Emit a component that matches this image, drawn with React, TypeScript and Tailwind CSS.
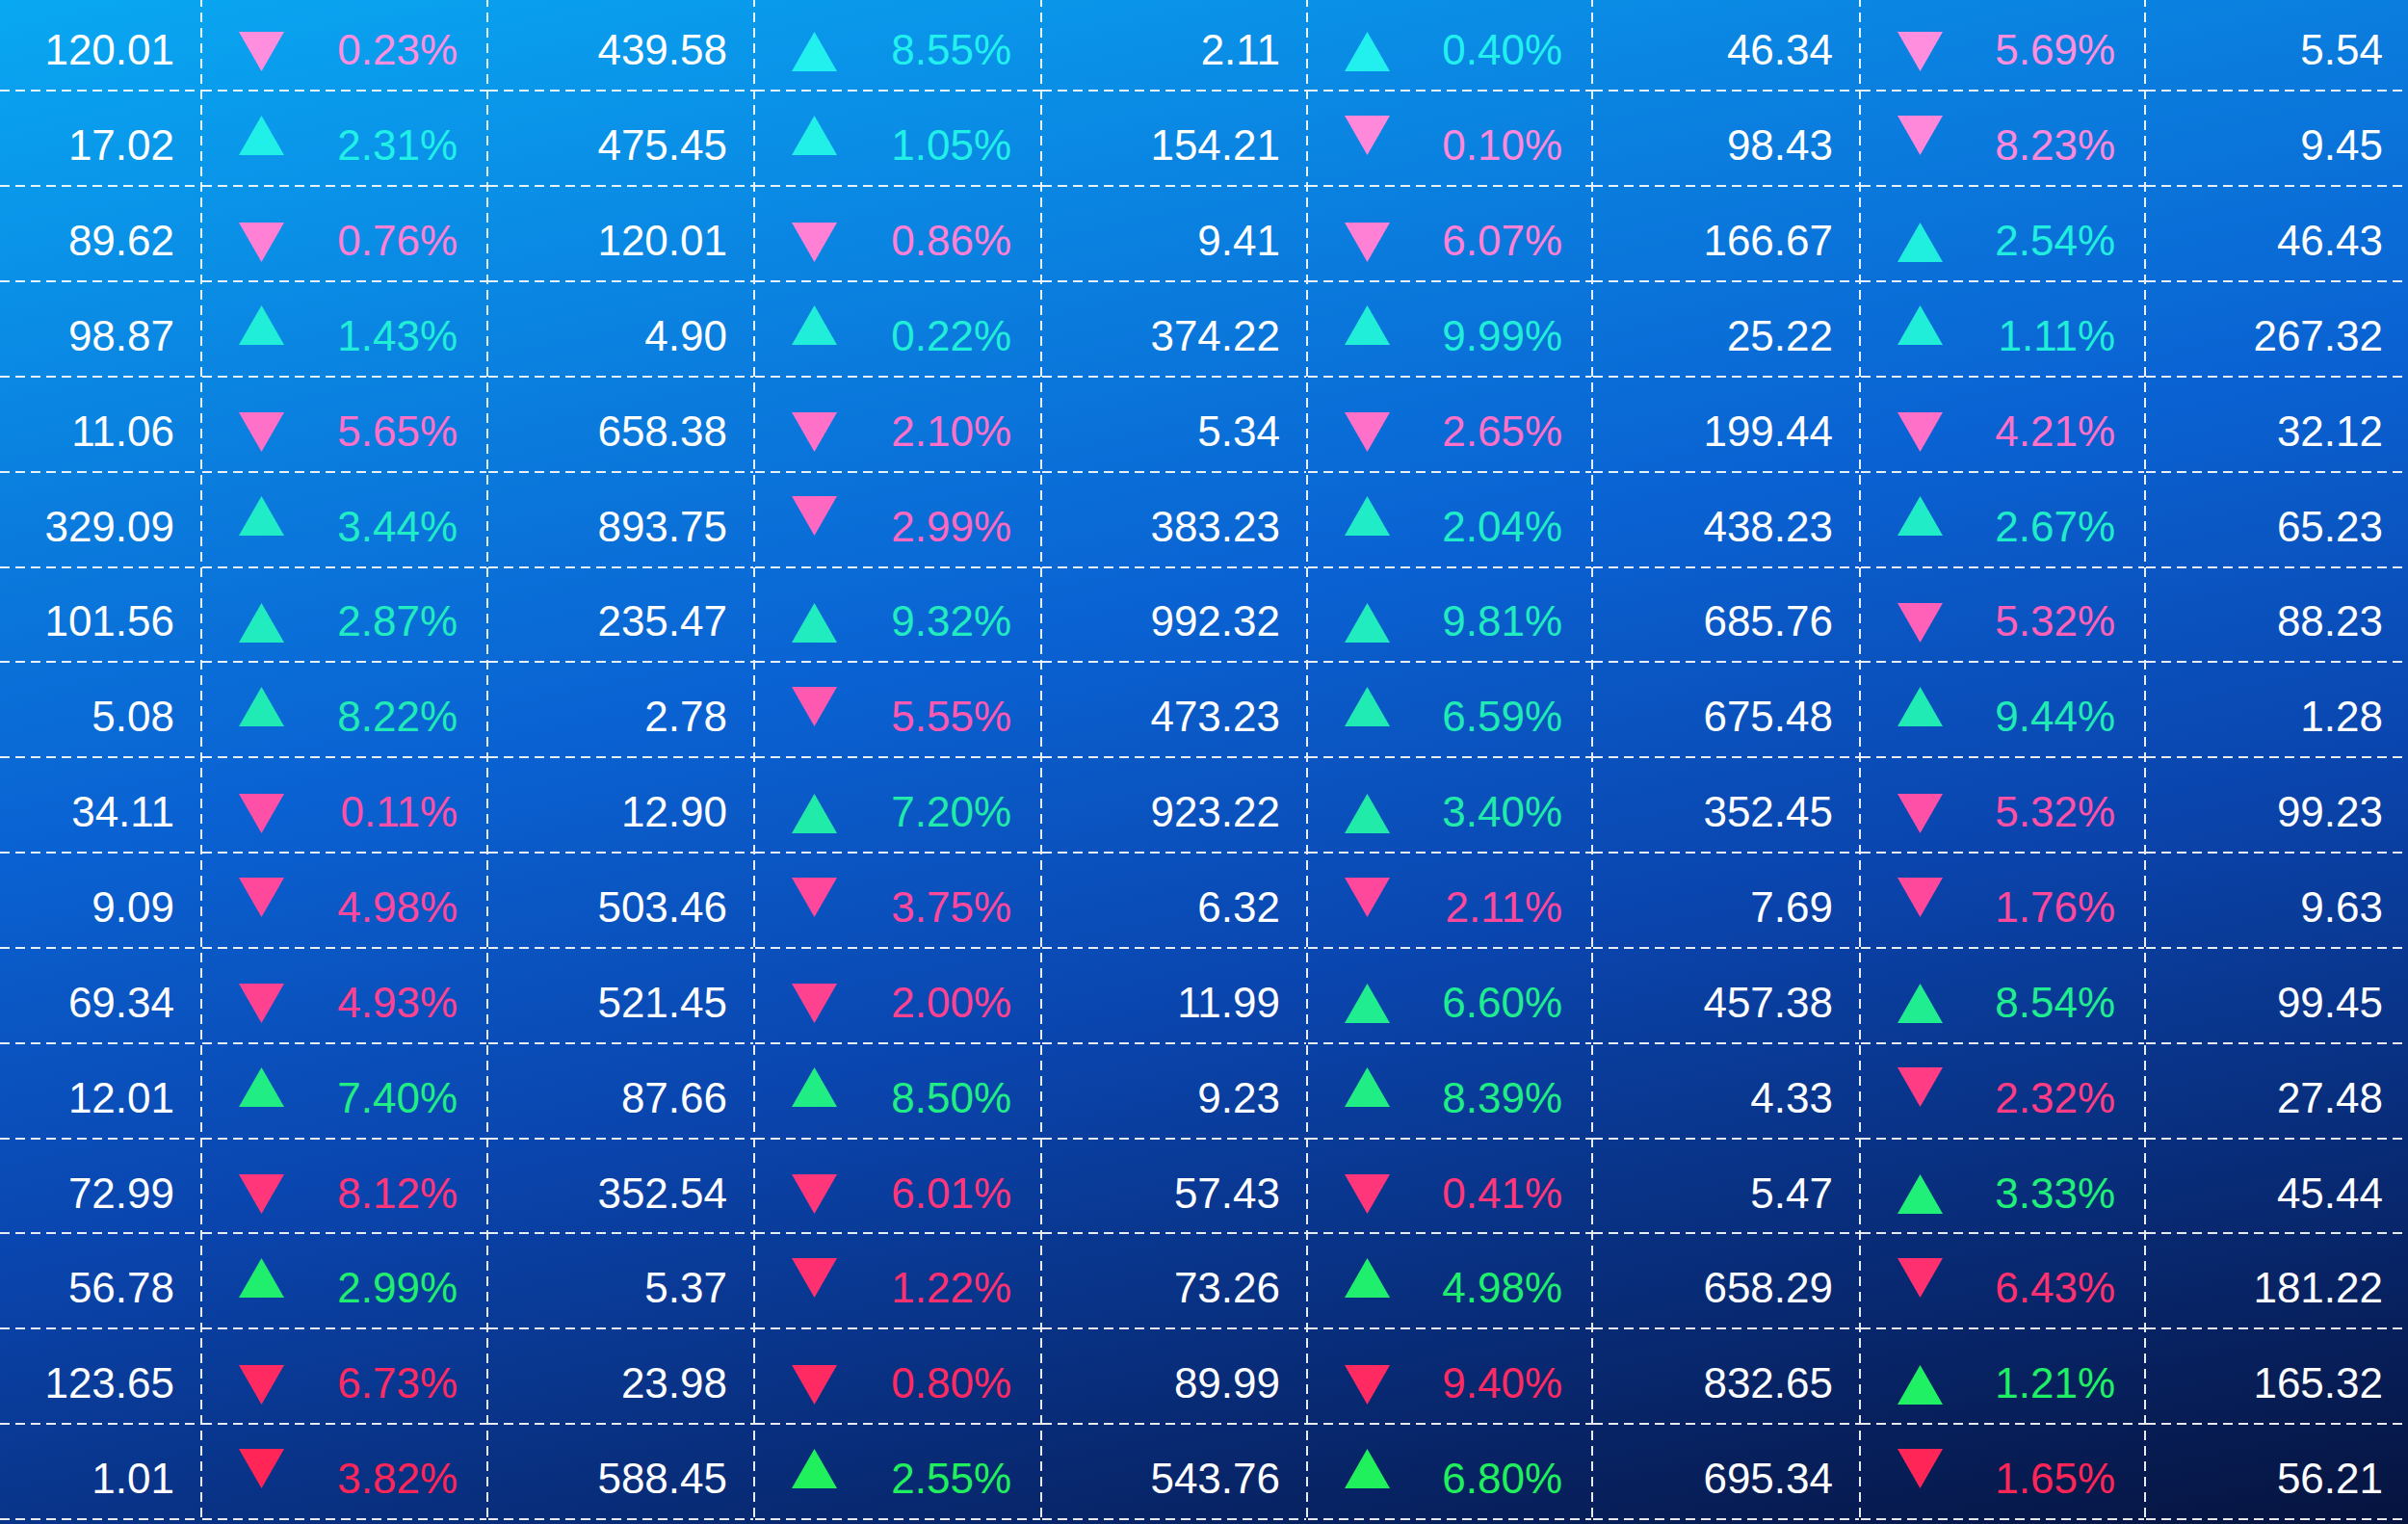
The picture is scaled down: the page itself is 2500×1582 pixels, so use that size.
import React from 'react'

type Cell = string

// each row: value, change, value, change, value, change, value, change, value
const rows: Cell[][] = [
  ['120.01', '-0.23', '439.58', '+8.55', '2.11', '+0.40', '46.34', '-5.69', '5.54'],
  ['17.02', '+2.31', '475.45', '+1.05', '154.21', '-0.10', '98.43', '-8.23', '9.45'],
  ['89.62', '-0.76', '120.01', '-0.86', '9.41', '-6.07', '166.67', '+2.54', '46.43'],
  ['98.87', '+1.43', '4.90', '+0.22', '374.22', '+9.99', '25.22', '+1.11', '267.32'],
  ['11.06', '-5.65', '658.38', '-2.10', '5.34', '-2.65', '199.44', '-4.21', '32.12'],
  ['329.09', '+3.44', '893.75', '-2.99', '383.23', '+2.04', '438.23', '+2.67', '65.23'],
  ['101.56', '+2.87', '235.47', '+9.32', '992.32', '+9.81', '685.76', '-5.32', '88.23'],
  ['5.08', '+8.22', '2.78', '-5.55', '473.23', '+6.59', '675.48', '+9.44', '1.28'],
  ['34.11', '-0.11', '12.90', '+7.20', '923.22', '+3.40', '352.45', '-5.32', '99.23'],
  ['9.09', '-4.98', '503.46', '-3.75', '6.32', '-2.11', '7.69', '-1.76', '9.63'],
  ['69.34', '-4.93', '521.45', '-2.00', '11.99', '+6.60', '457.38', '+8.54', '99.45'],
  ['12.01', '+7.40', '87.66', '+8.50', '9.23', '+8.39', '4.33', '-2.32', '27.48'],
  ['72.99', '-8.12', '352.54', '-6.01', '57.43', '-0.41', '5.47', '+3.33', '45.44'],
  ['56.78', '+2.99', '5.37', '-1.22', '73.26', '+4.98', '658.29', '-6.43', '181.22'],
  ['123.65', '-6.73', '23.98', '-0.80', '89.99', '-9.40', '832.65', '+1.21', '165.32'],
  ['1.01', '-3.82', '588.45', '+2.55', '543.76', '+6.80', '695.34', '-1.65', '56.21'],
]

const upColors = [
  'text-[#22f0ee]', 'text-[#20f0e8]', 'text-[#20efe0]', 'text-[#20eed8]',
  'text-[#20eed0]', 'text-[#20edc8]', 'text-[#20ecc0]', 'text-[#20ebb5]',
  'text-[#20eba8]', 'text-[#20ec9c]', 'text-[#20ed90]', 'text-[#20ee84]',
  'text-[#20ef78]', 'text-[#20ef6e]', 'text-[#20f064]', 'text-[#20f05c]',
]

const downColors = [
  'text-[#ff8ede]', 'text-[#ff88da]', 'text-[#ff80d4]', 'text-[#ff78ce]',
  'text-[#ff70c8]', 'text-[#ff68c0]', 'text-[#ff60b8]', 'text-[#ff58b0]',
  'text-[#ff50a8]', 'text-[#ff489c]', 'text-[#ff4290]', 'text-[#ff3c84]',
  'text-[#ff367a]', 'text-[#ff3070]', 'text-[#ff2a62]', 'text-[#ff2556]',
]

const colWidths = [
  'w-[210px]', 'w-[297px]', 'w-[277px]', 'w-[298px]', 'w-[276px]',
  'w-[296px]', 'w-[278px]', 'w-[296px]', 'flex-1',
]

const Triangle = ({up}: {up: boolean}) => (
  <svg width="47" height="41" viewBox="0 0 47 41" fill="currentColor">
    <polygon points={up ? '0,41 47,41 23.5,0' : '0,0 47,0 23.5,41'} />
  </svg>
)

const ValueCell = ({value, last}: {value: string; last: boolean}) => (
  <div
    className={`flex flex-1 items-center justify-end pt-[15px] text-white ${
      last ? 'pr-[26px]' : 'pr-[27px]'
    }`}
  >
    {value}
  </div>
)

const ChangeCell = ({change, row}: {change: string; row: number}) => {
  const up = change.startsWith('+')
  const color = up ? upColors[row] : downColors[row]
  return (
    <div className={`flex flex-1 items-center pt-[15px] pl-[38px] pr-[30px] ${color}`}>
      <div className={row % 2 ? '-translate-y-[11px]' : 'translate-y-px'}>
        <Triangle up={up} />
      </div>
      <span className="ml-auto">{change.slice(1)}%</span>
    </div>
  )
}

const Ticker = () => (
  <div className="h-[1582px] w-[2500px] overflow-hidden bg-[linear-gradient(168deg,#09a8f2_0%,#0a86e2_20%,#0a62d2_42%,#0a45ae_62%,#082a74_82%,#06133e_100%)] font-['Liberation_Sans',Arial,sans-serif] text-[44px] leading-none">
    <div className="mt-[-3.5px] flex">
      {colWidths.map((width, ci) => (
        <div key={ci} className={`flex ${width}`}>
          <div className="flex flex-1 flex-col">
            {rows.map((row, ri) => (
              <div key={ri} className="flex h-[98.85px] flex-col">
                {ci % 2 === 0 ? (
                  <ValueCell value={row[ci]} last={ci === 8} />
                ) : (
                  <ChangeCell change={row[ci]} row={ri} />
                )}
                <div className="h-[2px] bg-[repeating-linear-gradient(90deg,rgba(255,255,255,0.9)_0px_10px,transparent_10px_16px)]" />
              </div>
            ))}
          </div>
          {ci < 8 && (
            <div className="w-[2px] bg-[repeating-linear-gradient(180deg,rgba(255,255,255,0.9)_0px_10px,transparent_10px_16px)]" />
          )}
        </div>
      ))}
    </div>
  </div>
)

export default function App() {
  return <Ticker />
}
